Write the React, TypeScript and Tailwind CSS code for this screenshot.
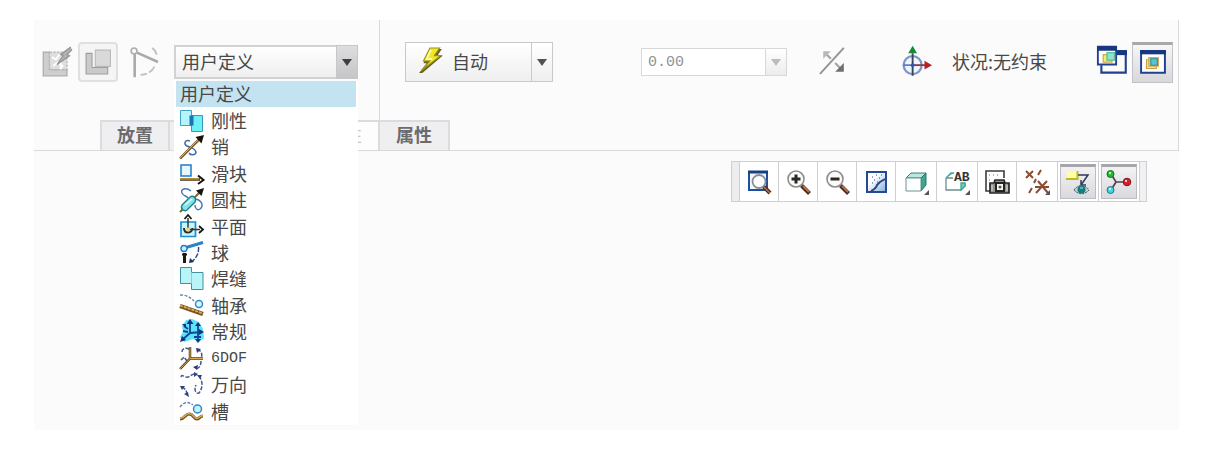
import { useState } from "react";
import type { ReactNode } from "react";

function Svg({ children, className = "h-6 w-6" }: { children: ReactNode; className?: string }) {
  return (
    <svg viewBox="0 0 24 24" fill="none" aria-hidden="true" className={`shrink-0 overflow-visible ${className}`}>
      {children}
    </svg>
  );
}

function Caret({ className }: { className: string }) {
  return (
    <svg viewBox="0 0 10 7" aria-hidden="true" className={`h-[7px] w-[10px] ${className}`}>
      <path d="M0 0h10L5 7z" fill="currentColor" />
    </svg>
  );
}

const RigidIcon = () => (
  <Svg>
    <path d="M.5 1.5h11v15H.5z" fill="#b5f4fb" stroke="#3fa3c4" />
    <path d="M11.5 6.5h11v16h-11z" fill="#6ff0f5" stroke="#3c97b3" />
    <path d="M9.5 6.5h4v10h-4z" fill="#1b74b4" />
  </Svg>
);

const PinIcon = () => (
  <Svg>
    <path d="M10 6C5 4 3 9 7 11s8 2 9 6c0 3-5 4-7 1" stroke="#3c6cae" strokeWidth="1.5" />
    <path d="M0 23.5 20 3.5" stroke="#7b5a22" strokeWidth="2.5" />
    <path d="M0 23 20 3" stroke="#e2b04c" strokeWidth="1" />
    <path d="M24 0 21.5 8.5 15.5 2z" fill="#16130f" />
  </Svg>
);

const SliderIcon = () => (
  <Svg>
    <path d="M1 3h10v11H1z" fill="#e3f7fd" stroke="#1f7ec8" strokeWidth="1.5" />
    <path d="M0 17.5h20" stroke="#4a3413" strokeWidth="2.5" />
    <path d="M0 17h19" stroke="#dba443" strokeWidth="1.2" />
    <path d="m18 13.5 5.500 4.500-5.500 4" stroke="#16130f" strokeWidth="2" />
  </Svg>
);

const CylinderIcon = () => (
  <Svg>
    <path d="M11 3C6-1 0 1 2 5s4 2 6 5M15 11c7 1 9 7 5 10-3 2-5-1-5-4" stroke="#4274b5" strokeWidth="1.4" />
    <path d="m0 24 21-21" stroke="#8c6725" strokeWidth="2.2" />
    <path d="m2 17 8-8c3-2 7 1 5 5l-8 8c-3 2-7-1-5-5z" fill="#83e3e2" stroke="#17808e" strokeWidth="1.3" />
    <path d="m5 17 7-6" stroke="#e4ffff" strokeWidth="1.5" />
    <path d="M24 0 21.5 8 16 2.5z" fill="#16130f" />
  </Svg>
);

const PlaneIcon = () => (
  <Svg>
    <path d="M1 7h14.500v14.500H1z" fill="#c3f5fc" stroke="#1d8fd0" strokeWidth="1.7" />
    <path d="M4 13c0 6 8 6 8.500 0" stroke="#2f2f2f" strokeWidth="2" />
    <path d="M8 14.500V3M8 14.500h12" stroke="#3b362c" strokeWidth="1.5" />
    <path d="m4.500 4 3.500-4 3.500 4M19 11l4 3.500-4 3.500" stroke="#171717" strokeWidth="1.8" />
    <circle cx="8" cy="14.500" r="2" fill="#ecd77c" />
  </Svg>
);

const BallIcon = () => (
  <Svg>
    <path d="m6 6.5 17-5" stroke="#2c82ca" strokeWidth="3" />
    <path d="M4.500 12v10" stroke="#211a12" strokeWidth="3" />
    <path d="M2 13.500h5" stroke="#211a12" strokeWidth="2" />
    <circle cx="4" cy="7.500" r="3" fill="#c6f2fa" stroke="#1f7fce" strokeWidth="1.4" />
    <path d="M18.500 6c.5 6-2 11-7 15" stroke="#344c8b" strokeWidth="1.5" strokeDasharray="5 1.500" />
    <path d="m9 22 1-5 4 4z" fill="#202d62" />
  </Svg>
);

const WeldIcon = () => (
  <Svg>
    <path d="M.5.5h11v5h11.500v17H11.500v-6H.5z" fill="#b9f5f8" stroke="#41929c" />
    <path d="M11.500 5.500v11" stroke="#7bd5df" />
  </Svg>
);

const BearingIcon = () => (
  <Svg>
    <path d="M0 1c5 0 9 1 14 6" stroke="#6681a8" strokeWidth="1.4" strokeDasharray="3 1.500" />
    <path d="m0 12 23 8" stroke="#785321" strokeWidth="4" />
    <path d="m0 11.500 23 8" stroke="#ddae54" strokeWidth="1.8" strokeDasharray="3 1" />
    <circle cx="19" cy="10" r="3.5" fill="#d8f8fc" stroke="#2c8bd1" strokeWidth="1.5" />
  </Svg>
);

const GeneralIcon = () => (
  <Svg>
    <path d="m6 0 6-1 7 3 4 7 1 9-5 4-6-3-9 3-4-5 3-5-1-6z" fill="#5fe0fb" />
    <path d="M10 2v11L2 20M10 13l11-1M4 6l4 3M18 5v15M3 11l5 1M14 17h7" stroke="#124591" strokeWidth="1.8" />
    <path d="m10-1 3.500 5h-7zM24 12l-5-3v6zM0 22l2-6 4 4zM18 23l-3-4h6zM18 2l3 4h-6zM2 4h4v4z" fill="#0f357c" />
  </Svg>
);

const SixDofIcon = () => (
  <Svg>
    <path d="M2 5c0-4 5-5 8-2M17 3c4 0 6 4 4 8M21 14c0 5-2 7-5 8M1 13l3-3 3 4" stroke="#3d5694" strokeWidth="1.5" strokeDasharray="4 1.500" />
    <path d="M10 0v11.500H23M10 11.500 0 22" stroke="#4e391c" strokeWidth="2.5" />
    <path d="M10 0v11.500H23M10 11.500 0 22" stroke="#daa652" />
    <path d="m13 20 5-2-1 5zM16 1l5 1-4 4z" fill="#293d7c" />
  </Svg>
);

const GimbalIcon = () => (
  <Svg>
    <path d="M1 4c1-4 3 1 7 0s5-5 9-2M19 3c4 5 4 12 0 17-4 1-5-4-3-8M2 14c4 2 5 5 5 9" stroke="#405b9a" strokeWidth="1.5" strokeDasharray="4 1.500" />
    <path d="m14-1 4 2-4 3zM0 13l5 0-3 4zM9 24l-5-3 4-2zM22 2l-5 0 3 4z" fill="#2e4280" />
  </Svg>
);

const SlotIcon = () => (
  <Svg>
    <path d="M0 7c4-5 8-6 13-2" stroke="#5e7cad" strokeWidth="1.4" strokeDasharray="3 1.500" />
    <path d="M0 19c5 0 5-5 9-5 5 0 4 5 8 5 2 0 3-3 6-3" stroke="#70501e" strokeWidth="3.2" />
    <path d="M0 18.500c5 0 5-5 9-5 5 0 4 5 8 5 2 0 3-3 6-3" stroke="#dbad57" strokeWidth="1.4" />
    <circle cx="17.500" cy="9" r="4" fill="#c2f3fb" stroke="#2b86cb" strokeWidth="1.5" />
  </Svg>
);

type Option = { label: string; icon?: ReactNode; mono?: boolean };

const options: Option[] = [
  { label: "用户定义" },
  { label: "刚性", icon: <RigidIcon /> },
  { label: "销", icon: <PinIcon /> },
  { label: "滑块", icon: <SliderIcon /> },
  { label: "圆柱", icon: <CylinderIcon /> },
  { label: "平面", icon: <PlaneIcon /> },
  { label: "球", icon: <BallIcon /> },
  { label: "焊缝", icon: <WeldIcon /> },
  { label: "轴承", icon: <BearingIcon /> },
  { label: "常规", icon: <GeneralIcon /> },
  { label: "6DOF", icon: <SixDofIcon />, mono: true },
  { label: "万向", icon: <GimbalIcon /> },
  { label: "槽", icon: <SlotIcon /> },
];

// the open list lies over the blank tabs
const tabs = [
  { name: "放置", text: "放置" },
  { name: "移动" },
  { name: "选项" },
  { name: "挠性", text: "挠性", disabled: true },
  { name: "属性", text: "属性" },
];

const Corner = () => <path d="M25 20v5h-5z" fill="#555" />;

function Lens({ sign }: { sign: string }) {
  return (
    <Svg>
      <path d="m15.500 15.500 8 8" stroke="#4b2d20" strokeWidth="4" />
      <path d="m17 16 6 6" stroke="#b87149" strokeWidth="1.8" />
      <circle cx="10" cy="9" r="8" fill="#fbfbf8" stroke="#8c8c8c" strokeWidth="1.6" />
      <path d={sign} stroke="#2d2727" strokeWidth="3" />
    </Svg>
  );
}

const tools = [
  {
    name: "重新调整",
    icon: (
      <Svg>
        <path d="M2 2h18v18H2z" fill="#f1f7fd" stroke="#1f4fa0" strokeWidth="2" />
        <path d="M1 2h20" stroke="#173f83" strokeWidth="3" />
        <path d="m16 16 7 7" stroke="#4b2d20" strokeWidth="4" />
        <path d="m17 17 6 6" stroke="#b87149" strokeWidth="1.5" />
        <circle cx="12" cy="11.500" r="6.5" fill="#fff" stroke="#8b8f96" strokeWidth="1.8" />
      </Svg>
    ),
  },
  { name: "放大", icon: <Lens sign="M5.500 9h9M10 4.500v9" /> },
  { name: "缩小", icon: <Lens sign="M5.500 9h9" /> },
  {
    name: "重画",
    icon: (
      <Svg>
        <defs>
          <linearGradient id="repaint" x1="0" y1="0" x2="1" y2="1">
            <stop offset=".35" stopColor="#fff" />
            <stop offset="1" stopColor="#7eaede" />
          </linearGradient>
        </defs>
        <path d="M3 2h19v20H3z" fill="url(#repaint)" stroke="#254a94" strokeWidth="2" />
        <path d="M7 21c2-1 5-2 6-6l3-3 5-3" stroke="#2a4580" strokeWidth="2" />
        <path d="M8 7h1M12 5h1M15 8h1M10 10h1M13 12h1M8 13h1M17 5h1" stroke="#7b7fb0" strokeWidth="1.3" />
      </Svg>
    ),
  },
  {
    name: "显示样式",
    menu: true,
    icon: (
      <Svg>
        <path d="M2 8 7 3h15l-4 5z" fill="#b9e8df" stroke="#377f77" />
        <path d="M17 8 22 3v12l-5 6z" fill="#3ca68f" stroke="#2c7469" />
        <path d="M2 8h15v13H2z" fill="#fbffff" stroke="#75908e" />
        <Corner />
      </Svg>
    ),
  },
  {
    name: "已保存方向",
    menu: true,
    icon: (
      <Svg>
        <path d="M1 8v12h15l4-4v-3M1 8h7" stroke="#718b91" strokeWidth="1.3" />
        <path d="M1 8 6 3h3M16 13v7l4-4v-3z" stroke="#38a79b" strokeWidth="1.3" fill="#73ccbf" />
        <text x="9" y="11" fontSize="13" fontWeight="700" fontFamily="Liberation Mono, monospace" fill="#333">
          AB
        </text>
        <Corner />
      </Svg>
    ),
  },
  {
    name: "视图管理器",
    icon: (
      <Svg>
        <path d="M19 8V1H1v20h4" stroke="#3b3b3b" strokeWidth="1.6" />
        <path d="M4 5h1M8 5h1M12 5h1M4 10h1M4 15h1" stroke="#6a6a6a" />
        <path d="M5 13h4l1-3h9l1 3h4v10H5z" fill="#92928b" stroke="#272727" strokeWidth="1.7" />
        <path d="M11 13h8v8h-8z" fill="#f6f6ee" stroke="#222" strokeWidth="2" />
        <circle cx="15" cy="17" r="1.5" fill="#555" />
        <path d="M7 15v6M22 15v6" stroke="#ddd" />
      </Svg>
    ),
  },
  {
    name: "基准显示过滤器",
    menu: true,
    icon: (
      <Svg>
        <path d="m1 1 7 7M8 1 1 8M16 0l-3 5M11 9l-2 4M7 18l-3 5M22 11 11 23M13 11l10 12M10 17h14" stroke="#8d4c31" strokeWidth="2" />
        <Corner />
      </Svg>
    ),
  },
  {
    name: "注释显示",
    pressed: true,
    icon: (
      <Svg>
        <path d="M1 1h10v7H1z" fill="#ffff9d" />
        <path d="M0 8h11.500V0" stroke="#c2b52c" strokeWidth="2" />
        <path d="M12 4h10l-7 10m0-5v5h5" stroke="#303a58" strokeWidth="1.5" />
        <path d="M8 19c4-6 11-6 15 0-4 5-11 5-15 0z" fill="#b7d4d3" stroke="#4b5959" strokeDasharray="2 1" />
        <circle cx="15.500" cy="18.500" r="4" fill="#197b7d" />
        <path d="M14 17h3" stroke="#71c9c5" strokeWidth="1.5" />
      </Svg>
    ),
  },
  {
    name: "旋转中心",
    pressed: true,
    icon: (
      <Svg>
        <path d="m4 3 5 8h10M9 11l-5 8" stroke="#56404b" strokeWidth="1.7" />
        <circle cx="3.500" cy="3" r="3.5" fill="#26ba2d" stroke="#166f1d" />
        <circle cx="3.500" cy="19" r="3.5" fill="#45d3dc" stroke="#187b91" />
        <circle cx="20" cy="11" r="3.8" fill="#d4202b" stroke="#811923" />
        <path d="M2 2h2M2 18h2M18 10h2" stroke="#fff" strokeWidth="1.5" />
      </Svg>
    ),
  },
];

export default function App() {
  const [constraint, setConstraint] = useState("用户定义");
  const [tab, setTab] = useState("");

  return (
    <div className="flex min-h-screen flex-col bg-white pt-5 pr-[30px] pb-7 pl-[34px] font-['Noto_Sans_CJK_SC',sans-serif] text-[18px] leading-6 text-[#484848]">
      <main className="flex-1 bg-[#fbfbfb]">
        <header className="border-r border-b border-[#d9d9da]">
          <div className="flex h-[100px]">
            <div className="flex h-full border-r border-[#d9d9da]">
              <div className="flex h-[84px] items-center pr-[21px] pl-2">
                <button aria-label="界面放置" className="mr-[6px]">
                  <Svg className="h-[30px] w-[30px]">
                    <path d="M1 4h5v14h14v5H1z" fill="#cecece" stroke="#adadad" />
                    <path d="M6 4h14v14H6z" fill="#dedede" stroke="#b5b5b5" strokeDasharray="2 1" />
                    <path d="m8 8 3 2 3-4M9 15l4-3 4 4M15 18v-6" stroke="#fff" strokeWidth="1.6" />
                    <path d="m23 0-8 6 2 1-5 7 10-7-2-1 4-4" fill="#b3b3b3" stroke="#929292" />
                  </Svg>
                </button>
                <button
                  aria-label="手动放置"
                  className="mr-3 flex h-10 w-10 items-center justify-center rounded-[4px] border-2 border-[#e0e0e1] bg-[#f5f5f6]"
                >
                  <Svg className="h-[26px] w-[26px]">
                    <path d="M1 4h5.500v13H21v6H1z" fill="#cacaca" stroke="#9d9d9d" />
                    <path d="M9.500 1h14v15h-14z" fill="#d9d9da" stroke="#bababa" />
                  </Svg>
                </button>
                <button aria-label="约束转换" className="mr-4">
                  <Svg className="h-7 w-7">
                    <path d="M4 5v20M6 4l18 8" stroke="#a9a9a9" strokeWidth="2.2" />
                    <circle cx="3.500" cy="2.500" r="2.5" fill="#fff" stroke="#b1b1b1" strokeWidth="1.5" />
                    <path d="M19 0c3 2 4 5 4 7M21 16c-2 4-6 7-12 7" stroke="#c1c1c1" strokeWidth="1.5" strokeDasharray="7 2" />
                  </Svg>
                </button>

                <div className="relative w-[184px]">
                  <select
                    aria-label="约束类型"
                    value={constraint}
                    onChange={(e) => setConstraint(e.target.value)}
                    className="block h-[34px] w-full appearance-none border-2 border-[#d2d2d3] bg-linear-to-b from-white to-[#efeff0] pb-[2px] pl-[6px] outline-none"
                  >
                    {options.map((o) => (
                      <option key={o.label}>{o.label}</option>
                    ))}
                  </select>
                  <span className="pointer-events-none absolute inset-y-0 right-0 flex w-[22px] items-center justify-center border border-[#c7c7c9] bg-linear-to-b from-[#dededf] to-[#c5c5c8]">
                    <Caret className="text-[#3f3f3f]" />
                  </span>

                  <ul role="listbox" aria-label="约束类型" className="absolute top-9 left-0 z-10 grid h-[344px] w-full auto-rows-fr bg-white px-[2px]">
                    {options.map((o) => (
                      <li
                        key={o.label}
                        role="option"
                        aria-selected={o.label === constraint}
                        onClick={() => setConstraint(o.label)}
                        className="flex items-center gap-[7px] px-1 aria-selected:bg-[#c3e3f1]"
                      >
                        {o.icon}
                        <span className={o.mono ? "font-['Liberation_Mono',monospace] text-[15px]" : "pb-[2px]"}>{o.label}</span>
                      </li>
                    ))}
                  </ul>
                </div>
              </div>
            </div>

            <div className="flex h-[84px] flex-1 items-center pr-[5px] pl-[25px]">
              <div className="flex h-10 w-[148px] border border-[#c9c9ca] bg-linear-to-b from-white to-[#efeff0]">
                <button className="flex flex-1 items-center gap-2 pb-[2px] pl-3">
                  <Svg className="h-[26px] w-[26px]">
                    <path d="M11 1h11l-4 6h5L4 23H1l7-9H5z" fill="#656319" />
                    <path d="M11 0h9l-5 7h6L3 21l8-9H5z" fill="#f1e823" stroke="#98912a" />
                    <path d="m12 2-4 8h5" stroke="#ffffae" strokeWidth="1.5" />
                  </Svg>
                  自动
                </button>
                <button aria-label="更多约束" className="flex w-[21px] items-center justify-center border-l border-[#c9c9ca]">
                  <Caret className="text-[#535353]" />
                </button>
              </div>

              <div className="ml-[88px] flex h-7 w-[146px] border border-[#d8d8d9] bg-white">
                <input
                  aria-label="偏移"
                  defaultValue="0.00"
                  className="w-0 flex-1 pt-[2px] pl-[6px] font-['Liberation_Mono',monospace] text-[15px] text-[#929292] outline-none"
                />
                <button aria-label="偏移值" className="flex w-[21px] items-center justify-center border-l border-[#d8d8d9] bg-linear-to-b from-white to-[#ececed]">
                  <Caret className="text-[#bcbcbc]" />
                </button>
              </div>

              <button aria-label="反向" className="ml-[33px]">
                <Svg className="h-[26px] w-[26px]">
                  <path d="M0 23 22-1" stroke="#949494" strokeWidth="1.8" />
                  <path d="m10 9-5-5M14 13l5 5" stroke="#a5a5a5" strokeWidth="2" />
                  <path d="M3 2h7L3 9z" fill="#b8b8b8" />
                  <path d="M22 21v-8l-8 8z" fill="#6f6f6f" />
                </Svg>
              </button>

              <button aria-label="3D 拖动器" className="ml-14">
                <Svg className="h-[30px] w-[30px]">
                  <circle cx="8.500" cy="14.500" r="7.2" fill="#f1f5fc" stroke="#8093c8" strokeWidth="1.8" />
                  <path d="M8.500 5v18" stroke="#36445e" strokeWidth="1.5" />
                  <path d="M1 14.500h7" stroke="#4c79bc" strokeWidth="1.3" />
                  <path d="M8.500 14.500H20" stroke="#86404b" strokeWidth="1.5" />
                  <path d="m8.500-1 3.500 6H5z" fill="#168a35" />
                  <path d="m24 14.500-6-3.500v7z" fill="#b51f27" />
                  <circle cx="8.500" cy="14.500" r="1.5" fill="#245bb3" />
                </Svg>
              </button>
              <span className="ml-5 pb-[2px] whitespace-nowrap">状况:无约束</span>

              <button aria-label="单独窗口" className="ml-auto">
                <Svg className="h-[30px] w-[30px]">
                  <path d="M16 3.500h7v17H3.500v-6" stroke="#20418e" strokeWidth="1.7" />
                  <path d="M15 2.500h9v4h-9z" fill="#183783" />
                  <path d="M.7 0h14.600v14H.7z" fill="#fff" stroke="#20418e" strokeWidth="1.5" />
                  <path d="M0-1h16v4H0z" fill="#183783" />
                  <path d="M5 6h7v6H5z" fill="#f3ed70" stroke="#d5a947" />
                  <path d="M8 4.500h6v6H8z" fill="#8be6cb" stroke="#62b8a0" />
                </Svg>
              </button>
              <button
                aria-label="组件窗口"
                aria-pressed="true"
                className="ml-[5px] flex h-[41px] w-[41px] items-center justify-center border border-t-[3px] border-[#c3c3c5] border-t-[#a9a9ab] bg-linear-to-b from-[#f7f7f8] to-[#d7d7dc]"
              >
                <Svg className="h-[26px] w-[26px]">
                  <path d="M1 1h22v20H1z" fill="#fff" stroke="#20418e" strokeWidth="1.8" />
                  <path d="M0 0h24v4H0z" fill="#183783" />
                  <path d="M6 9h9v8H6z" fill="#f3ed70" stroke="#c99d3f" />
                  <path d="M8 7h9v8H8z" fill="#9ae8a9" stroke="#e0a252" />
                  <path d="M10 8h6v6h-6z" fill="#52c8d3" stroke="#348896" />
                </Svg>
              </button>
            </div>
          </div>

          <nav className="flex h-[30px] pl-[66px]">
            {tabs.map((t) => (
              <button
                key={t.name}
                aria-label={t.name}
                disabled={t.disabled}
                onClick={() => setTab(t.name)}
                aria-pressed={tab === t.name}
                className="w-[70px] border-t-2 border-r-2 border-[#dcdcde] bg-[#efeff1] pb-1 font-bold text-[#6b6b6e] first:border-l-2 disabled:bg-[#fdfdfd] disabled:font-normal disabled:text-[#c6c6c6]"
              >
                {t.text}
              </button>
            ))}
          </nav>
        </header>

        <div className="flex justify-end pt-[10px] pr-8">
          <div role="toolbar" aria-label="图形工具" className="flex h-[41px] border border-[#cfcfd1] bg-white">
            <span className="w-[7px] bg-[#ededf0]" />
            {tools.map((t) => (
              <button
                key={t.name}
                aria-label={t.name}
                aria-pressed={t.pressed}
                className={
                  t.menu
                    ? "flex w-[41px] items-center justify-center border-l border-[#cfcfd1]"
                    : t.pressed
                      ? "w-[41px] border-l border-[#cfcfd1] p-[2px]"
                      : "flex w-[39px] items-center justify-center border-l border-[#cfcfd1]"
                }
              >
                {t.pressed ? (
                  <span className="flex h-full w-full items-center justify-center border border-t-[3px] border-[#bdbdc1] border-t-[#a6a6aa] bg-linear-to-b from-[#f3f3f5] to-[#dadade]">
                    {t.icon}
                  </span>
                ) : (
                  t.icon
                )}
              </button>
            ))}
            <span className="w-[7px] border-l border-[#cfcfd1] bg-[#f1f1f4]" />
          </div>
        </div>
      </main>
    </div>
  );
}
